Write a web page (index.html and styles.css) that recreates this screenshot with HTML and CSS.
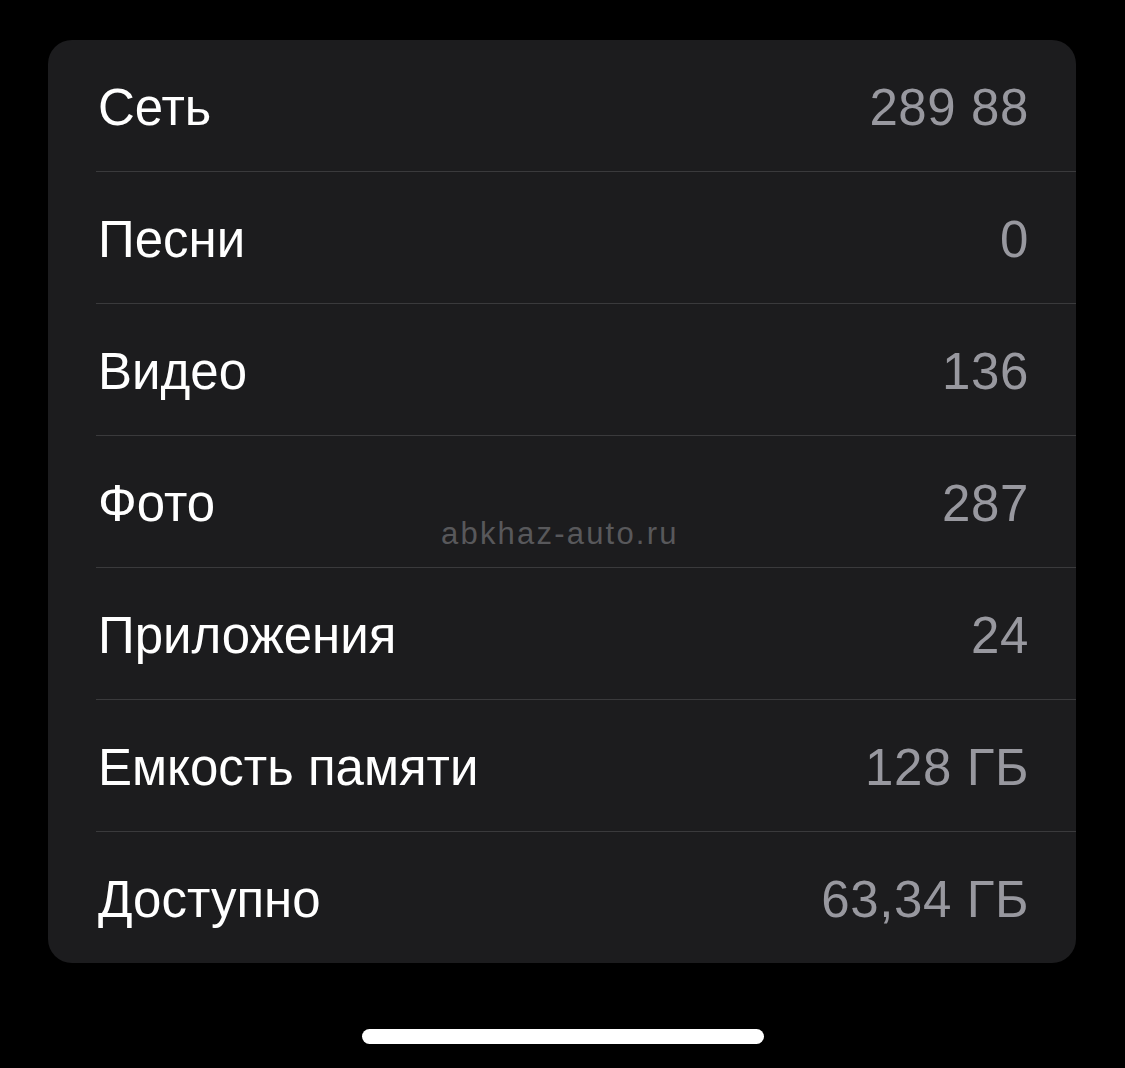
FILE: index.html
```html
<!DOCTYPE html>
<html lang="ru">
<head>
<meta charset="utf-8">
<link rel="stylesheet" href="styles.css">
</head>
<body>
<main class="screen">
  <section class="card">
    <div class="row"><span class="label">Сеть</span><span class="value">289 88</span></div>
    <div class="row"><span class="label">Песни</span><span class="value">0</span></div>
    <div class="row"><span class="label">Видео</span><span class="value">136</span></div>
    <div class="row"><span class="label">Фото</span><span class="value">287</span></div>
    <div class="row"><span class="label">Приложения</span><span class="value">24</span></div>
    <div class="row"><span class="label">Емкость памяти</span><span class="value">128 ГБ</span></div>
    <div class="row"><span class="label">Доступно</span><span class="value">63,34 ГБ</span></div>
    <span class="watermark">abkhaz-auto.ru</span>
  </section>
  <div class="home-indicator"></div>
</main>
</body>
</html>
```
FILE: styles.css
```css
html, body {
  margin: 0;
  padding: 0;
  background: #000;
}
body {
  width: 1125px;
  height: 1068px;
  overflow: hidden;
  font-family: "Liberation Sans", Arial, sans-serif;
}
.screen {
  display: flex;
  flex-direction: column;
  align-items: flex-start;
  padding: 40px 0 0 48px;
}
.card {
  position: relative;
  width: 1028px;
  background: #1c1c1e;
  border-radius: 24px;
  padding-left: 48px;
  box-sizing: border-box;
  display: flex;
  flex-direction: column;
}
.row {
  height: 132px;
  box-sizing: border-box;
  padding-top: 3px;
  display: flex;
  align-items: center;
  justify-content: space-between;
  padding-right: 47px;
  border-bottom: 1px solid #3a3a3c;
  font-size: 51px;
}
.row:last-of-type {
  height: 131px;
  border-bottom: none;
}
.label {
  color: #ffffff;
  margin-left: 2px;
}
.value {
  color: #98989f;
  letter-spacing: 0.6px;
}
.watermark {
  position: absolute;
  left: 393px;
  top: 476px;
  font-size: 31px;
  letter-spacing: 2.2px;
  color: #58585b;
}
.home-indicator {
  align-self: center;
  width: 402px;
  height: 15px;
  border-radius: 8px;
  background: #fff;
  margin: 66px 0 0 -48px;
}
```
